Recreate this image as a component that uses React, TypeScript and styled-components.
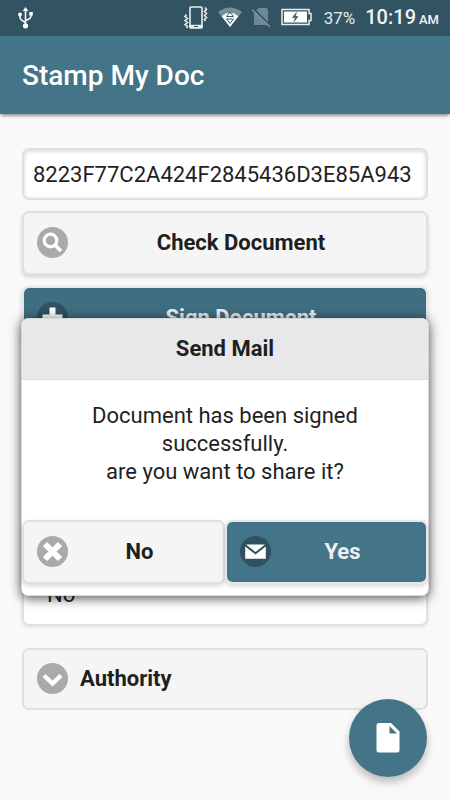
import React from "react";
import styled, { createGlobalStyle, css } from "styled-components";

const teal = "#447487";
const ink = "#1f1f1f";

const GlobalStyle = createGlobalStyle`
  *, *::before, *::after { box-sizing: border-box; }
  body { margin: 0; background: #f9f9f9; }
  body, button, input { font-family: Roboto, "Liberation Sans", sans-serif; }
`;

const Screen = styled.div`
  position: relative;
  min-height: 100vh;
  display: flex;
  flex-direction: column;
  color: ${ink};
  overflow: hidden;
`;

const StatusBar = styled.div`
  height: 36px;
  padding: 0 11px 0 17px;
  display: flex;
  align-items: center;
  background: #325362;
  color: #f1f4f5;
`;

const StatusIcons = styled.div`
  margin-left: auto;
  display: flex;
  align-items: center;
  gap: 10px;
`;

const Percent = styled.span`
  margin-left: 12px;
  font-size: 17px;
  line-height: 36px;
  color: #e6ebed;
`;

const Clock = styled.span`
  margin-left: 10px;
  font-size: 20px;
  font-weight: 500;
  line-height: 36px;
`;

const Meridiem = styled.small`
  margin-left: 3px;
  font-size: 13px;
`;

const Header = styled.header`
  height: 78px;
  padding: 2px 22px 0;
  display: flex;
  align-items: center;
  background: ${teal};
  color: #fff;
  box-shadow: 0 3px 3px -1px rgba(0, 0, 0, 0.4);
`;

const Title = styled.h1`
  margin: 0;
  font-size: 28px;
  font-weight: 500;
  line-height: 32px;
`;

const Main = styled.main`
  padding: 34px 22px 24px;
  display: flex;
  flex-direction: column;
`;

const CodeInput = styled.input`
  width: 100%;
  height: 52px;
  margin-bottom: 11px;
  padding: 0 9px;
  border: 2px solid #e0e0e0;
  border-radius: 7px;
  background: #fff;
  box-shadow: inset 0 1px 4px rgba(0, 0, 0, 0.18);
  font-size: 22px;
  color: ${ink};
`;

const ActionButton = styled.button<{ $primary?: boolean }>`
  position: relative;
  width: 100%;
  height: 64px;
  padding: 0 16px 0 48px;
  border: 2px solid #e0e0e0;
  border-radius: 7px;
  background: #f5f5f5;
  box-shadow: 0 2px 4px rgba(0, 0, 0, 0.16);
  font-size: 22px;
  font-weight: 700;
  line-height: 28px;
  color: ${ink};
  text-align: center;
  ${(p) =>
    p.$primary &&
    css`
      border-color: #e4e8ea;
      background: ${teal};
      background-clip: padding-box;
      color: #eeeeee;
    `}
`;

const Badge = styled.span<{ $dark?: boolean }>`
  position: absolute;
  left: 13px;
  top: 50%;
  width: 31px;
  height: 31px;
  margin-top: -16px;
  border-radius: 50%;
  background: ${(p) => (p.$dark ? "#30515e" : "#aaaaaa")};
  svg { display: block; }
`;

const Stack = styled.div`
  display: flex;
  flex-direction: column;
  gap: 11px;
`;

const SignButton = styled(ActionButton)`
  background-color: #3f6e80;
`;

const Panel = styled.section`
  min-height: 265px;
  padding: 15px 23px;
  display: flex;
  align-items: flex-end;
  border: 2px solid #e0e0e0;
  border-radius: 7px;
  background: #fff;
  box-shadow: 0 1px 4px rgba(0, 0, 0, 0.1);
  font-size: 22px;
  line-height: 28px;
`;

const Collapsible = styled(ActionButton)`
  height: 62px;
  margin-top: 22px;
  padding-left: 56px;
  box-shadow: none;
  text-align: left;
`;

const Overlay = styled.div`
  position: absolute;
  inset: 114px 0 0;
  padding: 0 21px;
  display: flex;
  align-items: center;
`;

const Dialog = styled.section`
  width: 100%;
  border: 1px solid #d8d8d8;
  border-radius: 7px;
  background: #fff;
  box-shadow: 0 2px 12px rgba(0, 0, 0, 0.7);
`;

const DialogTitle = styled.h2`
  margin: 0;
  padding: 16px 0;
  border-bottom: 1px solid #dddddd;
  border-radius: 6px 6px 0 0;
  background: #e8e8e8;
  font-size: 22px;
  font-weight: 700;
  line-height: 28px;
  text-align: center;
`;

const Message = styled.p`
  margin: 0;
  padding: 22px 24px 34px;
  font-size: 22px;
  line-height: 28px;
  text-align: center;
`;

const DialogActions = styled.div`
  padding: 0 0 11px;
  display: grid;
  grid-template-columns: 1fr 1fr;
`;

const Fab = styled.button`
  position: absolute;
  right: 23px;
  bottom: 23px;
  width: 78px;
  height: 78px;
  padding: 0;
  display: grid;
  place-items: center;
  border: 0;
  border-radius: 50%;
  background: ${teal};
  box-shadow: 0 5px 9px rgba(0, 0, 0, 0.26);
`;

type Glyph = "search" | "plus" | "close" | "mail" | "down";

function BadgeIcon({ name, dark }: { name: Glyph; dark?: boolean }) {
  return (
    <Badge $dark={dark} aria-hidden="true">
      <svg width="31" height="31" viewBox="0 0 31 31" fill="none" stroke="#fff">
        {name === "search" && (
          <>
            <circle cx="13.5" cy="13.5" r="6.3" strokeWidth="3.2" />
            <path d="M18 18l6 6" strokeWidth="3.6" />
          </>
        )}
        {name === "plus" && <path d="M15.5 5.5v20M5.5 15.5h20" strokeWidth="6" />}
        {name === "close" && <path d="M8 8l15 15M23 8L8 23" strokeWidth="6" />}
        {name === "down" && <path d="M7 12.5l8.5 8 8.5-8" strokeWidth="4.4" />}
        {name === "mail" && (
          <path d="M6 8.5h19l-9.5 7.5zM5.2 10.5l10.3 8 10.3-8v12.3H5.2z" fill="#fff" stroke="none" />
        )}
      </svg>
    </Badge>
  );
}

function UsbIcon() {
  return (
    <svg width="17" height="22" viewBox="0 0 17 22" fill="none" stroke="#fff" strokeWidth="1.5" aria-hidden="true">
      <path d="M8.5 2v16M3 8v2.500c0 2 1 2.800 5.500 5M14 7v2c0 2-1 3-5.500 4.500" />
      <circle cx="8.5" cy="18.8" r="2.6" fill="#fff" stroke="none" />
      <path d="M8.5 0l2.8 4H5.7z" fill="#fff" stroke="none" />
      <circle cx="3" cy="7.5" r="1.9" fill="#fff" stroke="none" />
      <path d="M12.3 5h3.5v3.5h-3.5z" fill="#fff" stroke="none" />
    </svg>
  );
}

function VibrateIcon() {
  return (
    <svg width="24" height="24" viewBox="0 0 24 24" fill="none" stroke="#e9eef0" aria-hidden="true">
      <rect x="6" y="1" width="12" height="21" rx="1" strokeWidth="1.6" />
      <path d="M5.5 20.5h13" strokeWidth="3.4" />
      <path d="M10 20.5h4" stroke="#325362" />
      <path d="M2.500 8.500l-1.500 2 2.500 2-2.500 2 2.500 2-2.500 2 2.500 2-1 1.500M21 1.500l1.500 2-2 2 2 2-2 2 2 2-2 2 1 1.500" strokeWidth="1.6" />
    </svg>
  );
}

function WifiIcon() {
  return (
    <svg width="24" height="24" viewBox="0 0 24 24" aria-hidden="true">
      <path d="M0 6Q12-3 24 6L12 21z" fill="#74909b" />
      <path d="M3.600 10.200Q12 3.500 20.400 10.200L12 21z" fill="#fff" />
      <path d="M8.500 10.500h7L12 6zM8.500 13h7L12 17.500z" fill="#fff" stroke="#325362" />
    </svg>
  );
}

function NoSimIcon() {
  return (
    <svg width="19" height="22" viewBox="0 0 19 22" aria-hidden="true">
      <path d="M6.500 1H14q2 0 2 2v15H2V6z" fill="#6f8994" />
      <path d="M1 1.500l18 18" stroke="#325362" strokeWidth="2" />
      <path d="M0 2.500l18 17.500" stroke="#7e969f" strokeWidth="1.5" />
    </svg>
  );
}

function BatteryIcon() {
  return (
    <svg width="31" height="20" viewBox="0 0 31 20" aria-hidden="true">
      <path d="M1 1.500h27v4h2v7h-2v4H1z" fill="#325362" stroke="#e9eef0" strokeWidth="1.5" />
      <path d="M3 3.500h23v11H3z" fill="#fff" />
      <path d="M15.500 4.500l-4 5h3L13 13.500l4-5h-3z" fill="#325362" stroke="#325362" strokeWidth="0.6" />
    </svg>
  );
}

export default function App() {
  return (
    <>
      <GlobalStyle />
      <Screen>
        <StatusBar>
          <UsbIcon />
          <StatusIcons>
            <VibrateIcon />
            <WifiIcon />
            <NoSimIcon />
            <BatteryIcon />
          </StatusIcons>
          <Percent>37%</Percent>
          <Clock>
            10:19<Meridiem>AM</Meridiem>
          </Clock>
        </StatusBar>
        <Header>
          <Title>Stamp My Doc</Title>
        </Header>
        <Main>
          <CodeInput aria-label="Document code" defaultValue="8223F77C2A424F2845436D3E85A943" />
          <Stack>
            <ActionButton type="button">
              <BadgeIcon name="search" />
              Check Document
            </ActionButton>
            <SignButton type="button" $primary>
              <BadgeIcon name="plus" dark />
              Sign Document
            </SignButton>
            <Panel>No</Panel>
          </Stack>
          <Collapsible type="button" aria-expanded="false">
            <BadgeIcon name="down" />
            Authority
          </Collapsible>
        </Main>
        <Overlay>
          <Dialog role="dialog" aria-labelledby="mail-title">
            <DialogTitle id="mail-title">Send Mail</DialogTitle>
            <Message>
              Document has been signed successfully.
              <br />
              are you want to share it?
            </Message>
            <DialogActions>
              <ActionButton type="button">
                <BadgeIcon name="close" />
                No
              </ActionButton>
              <ActionButton type="button" $primary>
                <BadgeIcon name="mail" dark />
                Yes
              </ActionButton>
            </DialogActions>
          </Dialog>
        </Overlay>
        <Fab type="button" aria-label="New document">
          <svg width="24" height="30" viewBox="0 0 24 30" aria-hidden="true">
            <path d="M3 0h12l8.500 8.500V27q0 2.500-2.500 2.500H3Q.5 29.500 .5 27V2.500Q.5 0 3 0z" fill="#fff" />
            <path d="M13.500 3v7.500h7.500z" fill={teal} />
          </svg>
        </Fab>
      </Screen>
    </>
  );
}
